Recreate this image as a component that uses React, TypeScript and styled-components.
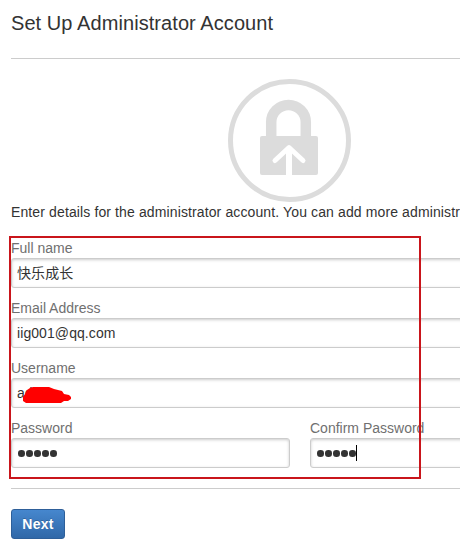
import React from "react";
import styled, { createGlobalStyle } from "styled-components";

const GlobalStyle = createGlobalStyle`
  * {
    box-sizing: border-box;
  }
  body {
    margin: 0;
    background: #fff;
    color: #333;
    font-family: "Liberation Sans", "Noto Sans CJK SC", Arial, sans-serif;
    font-size: 14px;
    line-height: 20px;
    overflow: hidden;
  }
`;

const Page = styled.main`
  position: relative;
  width: 460px;
  height: 544px;
  padding-left: 11px;
  overflow: hidden;
`;

const Title = styled.h1`
  height: 58px;
  margin: 0;
  padding-top: 11px;
  font-size: 20px;
  font-weight: normal;
  letter-spacing: 0.07px;
  line-height: 24px;
  white-space: nowrap;
`;

const Divider = styled.hr`
  height: 1px;
  margin: 0;
  border: none;
  background: #ccc;
`;

const Emblem = styled.div`
  width: 557px;
  height: 143px;
  padding-top: 20px;
  svg {
    display: block;
    margin: 0 auto;
  }
`;

const Intro = styled.p`
  margin: 0 0 16px;
  letter-spacing: 0.12px;
  white-space: nowrap;
`;

const Form = styled.form`
  display: flex;
  flex-direction: column;
  gap: 10px;
  width: 578px;
  height: 250px;
`;

const FieldRow = styled.div`
  display: grid;
  grid-template-columns: 279px 279px;
  gap: 20px;
`;

const Field = styled.div`
  display: flex;
  flex-direction: column;
`;

const Label = styled.label`
  height: 20px;
  color: #707070;
`;

const Input = styled.div<{ $secret?: boolean }>`
  position: relative;
  display: flex;
  align-items: center;
  height: 30px;
  padding: 0 5px;
  border: 1px solid #ccc;
  border-radius: 3px;
  box-shadow: inset 0 1px 3px #ccc;
  letter-spacing: 0.08px;
  ${({ $secret }) => $secret && "padding: 1px 6px 0; gap: 1.4px;"}
`;

const Dot = styled.span`
  width: 6.6px;
  height: 6.6px;
  border-radius: 50%;
  background: #333;
`;

const Caret = styled.span`
  width: 1px;
  height: 16px;
  margin: -2px 0 0 -1px;
  background: #000;
`;

const Scribble = styled.svg`
  position: absolute;
  left: 11px;
  top: 7px;
`;

const Actions = styled.div`
  padding-top: 20px;
`;

const NextButton = styled.button`
  width: 54px;
  height: 30px;
  padding: 0;
  border: 1px solid #2e5f99;
  border-radius: 3px;
  background: linear-gradient(#4687ce, #3068a8);
  color: #fff;
  font: bold 14px/20px "Liberation Sans", Arial, sans-serif;
  letter-spacing: 0.3px;
  text-shadow: 0 -1px 0 rgba(0, 0, 0, 0.2);
`;

const Highlight = styled.div`
  position: absolute;
  left: 9px;
  top: 236px;
  width: 412px;
  height: 243px;
  border: 2px solid #c9151b;
  pointer-events: none;
`;

const LockIcon = () => (
  <svg width="123" height="123" viewBox="0 0 123 123" fill="none">
    <circle cx="61.5" cy="61.5" r="59" stroke="#dcdcdc" strokeWidth="5" />
    <path
      d="M43.5 58V43a17.3 17.3 0 0 1 34.6 0v15"
      transform="translate(-0.3 0.3)"
      stroke="#dcdcdc"
      strokeWidth="10.5"
    />
    <rect x="32" y="57" width="58" height="39" rx="2" fill="#dcdcdc" />
    <path d="M61 97V70" stroke="#fff" strokeWidth="6" />
    <path
      d="M47 81.5L61 68.5l14 13"
      stroke="#fff"
      strokeWidth="5"
      strokeLinecap="round"
      strokeLinejoin="round"
    />
  </svg>
);

const Dots = () => (
  <>
    {[1, 2, 3, 4, 5].map((n) => (
      <Dot key={n} />
    ))}
  </>
);

const App = (): JSX.Element => {
  return (
    <Page>
      <GlobalStyle />
      <Title>Set Up Administrator Account</Title>
      <Divider />
      <Emblem>
        <LockIcon />
      </Emblem>
      <Intro>
        Enter details for the administrator account. You can add more administra
      </Intro>
      <Form>
        <Field>
          <Label>Full name</Label>
          <Input>快乐成长</Input>
        </Field>
        <Field>
          <Label>Email Address</Label>
          <Input>iig001@qq.com</Input>
        </Field>
        <Field>
          <Label>Username</Label>
          <Input>
            ad
            <Scribble width="49" height="18" viewBox="0 0 49 18">
              <path
                d="M0 15V11L2 8L4 4L7 2L10 1H26L31 3L39 5L41 8L46 9L48 11V13L45 15H41L38 17H3Z"
                fill="#f00"
              />
            </Scribble>
          </Input>
        </Field>
        <FieldRow>
          <Field>
            <Label>Password</Label>
            <Input $secret>
              <Dots />
            </Input>
          </Field>
          <Field>
            <Label>Confirm Password</Label>
            <Input $secret>
              <Dots />
              <Caret />
            </Input>
          </Field>
        </FieldRow>
      </Form>
      <Divider />
      <Actions>
        <NextButton type="button">Next</NextButton>
      </Actions>
      <Highlight />
    </Page>
  );
};

export default App;
